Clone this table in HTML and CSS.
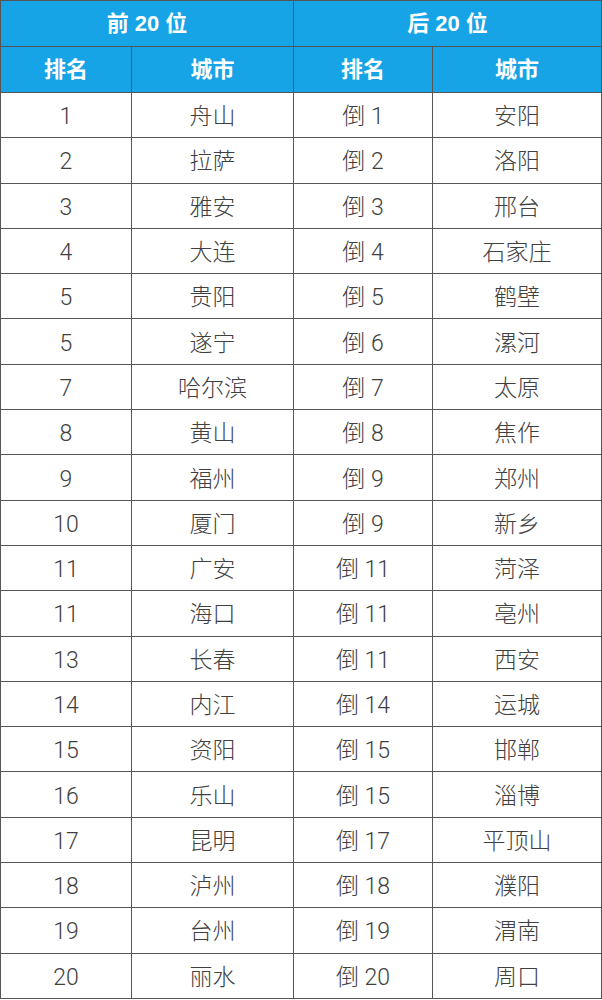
FILE: index.html
```html
<!DOCTYPE html>
<html lang="zh">
<head>
<meta charset="utf-8">
<link rel="stylesheet" href="styles.css">
</head>
<body>
<table class="rank">
<colgroup><col class="c1"><col class="c2"><col class="c3"><col class="c4"></colgroup>
<thead>
<tr class="h1"><th colspan="2">前 20 位</th><th colspan="2">后 20 位</th></tr>
<tr class="h2"><th>排名</th><th>城市</th><th>排名</th><th>城市</th></tr>
</thead>
<tbody>
<tr><td>1</td><td>舟山</td><td>倒 1</td><td>安阳</td></tr>
<tr><td>2</td><td>拉萨</td><td>倒 2</td><td>洛阳</td></tr>
<tr><td>3</td><td>雅安</td><td>倒 3</td><td>邢台</td></tr>
<tr><td>4</td><td>大连</td><td>倒 4</td><td>石家庄</td></tr>
<tr><td>5</td><td>贵阳</td><td>倒 5</td><td>鹤壁</td></tr>
<tr><td>5</td><td>遂宁</td><td>倒 6</td><td>漯河</td></tr>
<tr><td>7</td><td>哈尔滨</td><td>倒 7</td><td>太原</td></tr>
<tr><td>8</td><td>黄山</td><td>倒 8</td><td>焦作</td></tr>
<tr><td>9</td><td>福州</td><td>倒 9</td><td>郑州</td></tr>
<tr><td>10</td><td>厦门</td><td>倒 9</td><td>新乡</td></tr>
<tr><td>11</td><td>广安</td><td>倒 11</td><td>菏泽</td></tr>
<tr><td>11</td><td>海口</td><td>倒 11</td><td>亳州</td></tr>
<tr><td>13</td><td>长春</td><td>倒 11</td><td>西安</td></tr>
<tr><td>14</td><td>内江</td><td>倒 14</td><td>运城</td></tr>
<tr><td>15</td><td>资阳</td><td>倒 15</td><td>邯郸</td></tr>
<tr><td>16</td><td>乐山</td><td>倒 15</td><td>淄博</td></tr>
<tr><td>17</td><td>昆明</td><td>倒 17</td><td>平顶山</td></tr>
<tr><td>18</td><td>泸州</td><td>倒 18</td><td>濮阳</td></tr>
<tr><td>19</td><td>台州</td><td>倒 19</td><td>渭南</td></tr>
<tr><td>20</td><td>丽水</td><td>倒 20</td><td>周口</td></tr>
</tbody>
</table>
</body>
</html>
```
FILE: styles.css
```css
html, body {
  margin: 0;
  padding: 0;
  background: #ffffff;
}
.rank {
  border-collapse: collapse;
  table-layout: fixed;
  width: 601px;
  font-family: "Liberation Sans", "Noto Sans CJK SC", sans-serif;
  font-size: 22px;
  color: #404040;
}
.c1 { width: 131px; }
.c2 { width: 162px; }
.c3 { width: 139px; }
.c4 { width: 169px; }
.rank th, .rank td {
  border: 1px solid #555555;
  text-align: center;
  vertical-align: middle;
  padding: 0;
  line-height: 24px;
}
.rank th {
  background: #17a4e6;
  color: #ffffff;
  font-weight: bold;
  height: 45px;
}
.rank td {
  height: 40.3px;
  padding-top: 4px;
  font-weight: 300;
  font-family: Roboto, "Noto Sans CJK SC", sans-serif;
  font-size: 23px;
}
```
